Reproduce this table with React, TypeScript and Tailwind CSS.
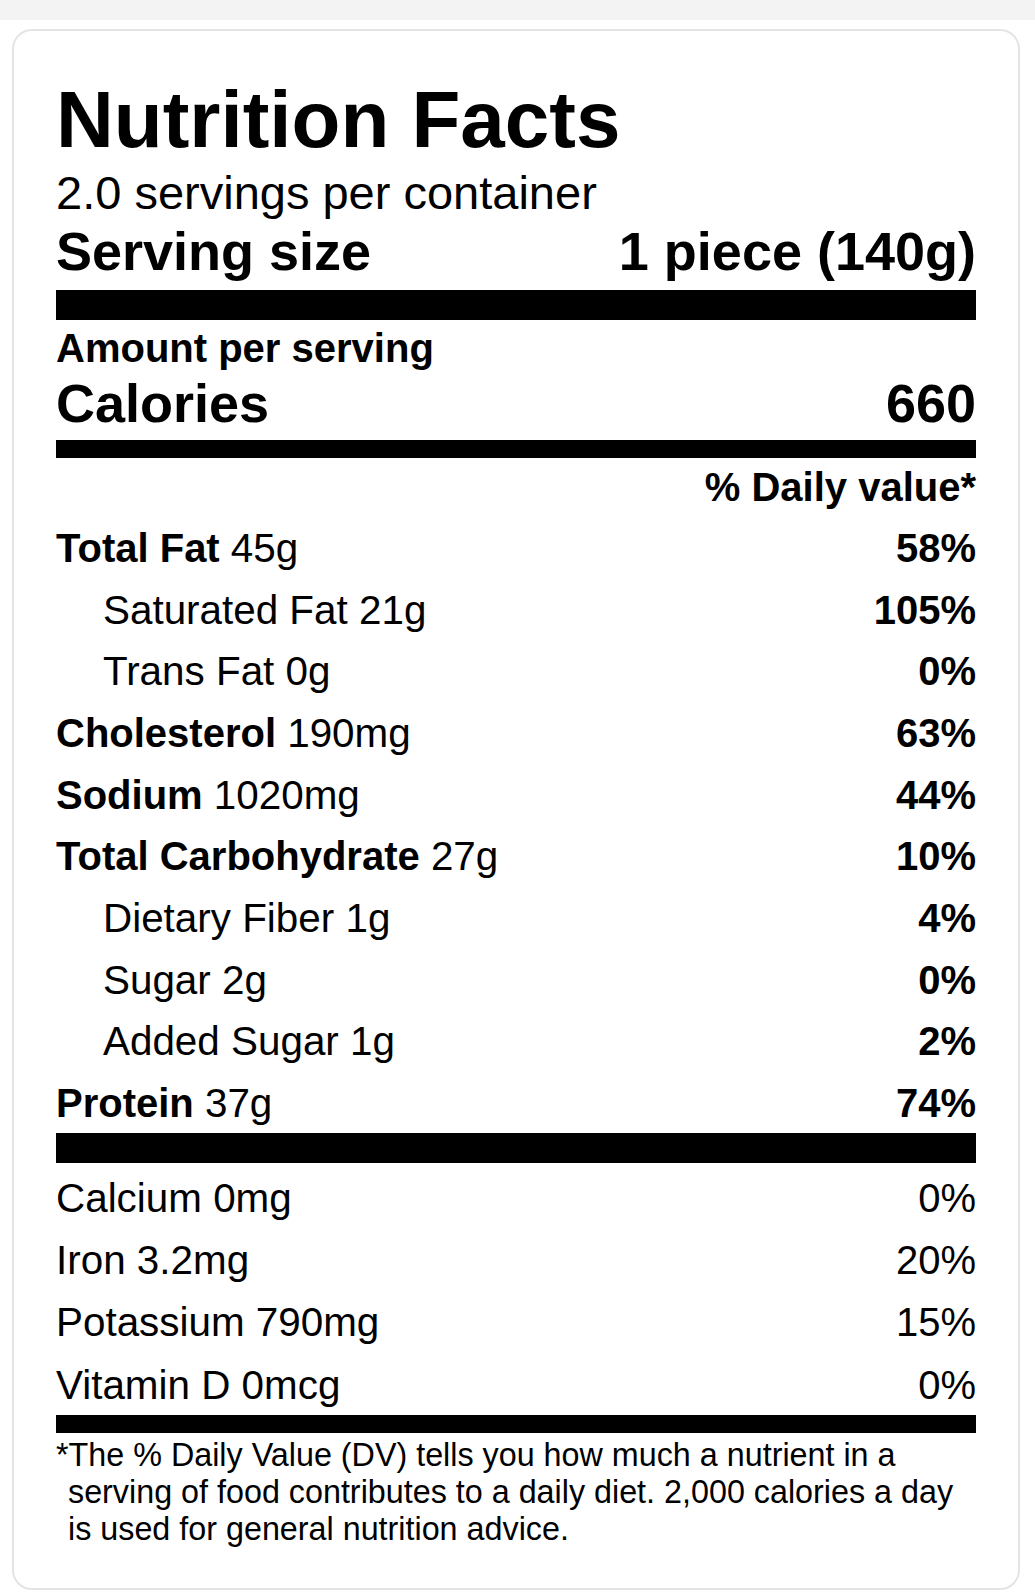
import React from 'react'

type Row = {
  name: string
  amount: string
  dv: string
  sub?: boolean
}

const macroRows: Row[] = [
  { name: 'Total Fat', amount: '45g', dv: '58%' },
  { name: 'Saturated Fat', amount: '21g', dv: '105%', sub: true },
  { name: 'Trans Fat', amount: '0g', dv: '0%', sub: true },
  { name: 'Cholesterol', amount: '190mg', dv: '63%' },
  { name: 'Sodium', amount: '1020mg', dv: '44%' },
  { name: 'Total Carbohydrate', amount: '27g', dv: '10%' },
  { name: 'Dietary Fiber', amount: '1g', dv: '4%', sub: true },
  { name: 'Sugar', amount: '2g', dv: '0%', sub: true },
  { name: 'Added Sugar', amount: '1g', dv: '2%', sub: true },
  { name: 'Protein', amount: '37g', dv: '74%' },
]

const microRows = [
  { name: 'Calcium', amount: '0mg', dv: '0%' },
  { name: 'Iron', amount: '3.2mg', dv: '20%' },
  { name: 'Potassium', amount: '790mg', dv: '15%' },
  { name: 'Vitamin D', amount: '0mcg', dv: '0%' },
]

function MacroRow({ row }: { row: Row }) {
  return (
    <div className="flex items-center justify-between text-[40px] leading-[57.67px]">
      {row.sub ? (
        <span className="pl-[47px] text-[40.4px] font-normal">
          {row.name} {row.amount}
        </span>
      ) : (
        <span>
          <span className="font-bold">{row.name}</span>{' '}
          <span className="text-[40.4px]">{row.amount}</span>
        </span>
      )}
      <span className="font-bold">{row.dv}</span>
    </div>
  )
}

export default function App() {
  return (
    <div
      className="min-h-screen bg-white text-black"
      style={{ fontFamily: '"Liberation Sans", Arial, Helvetica, sans-serif' }}
    >
      <div className="h-[20px] bg-[#f3f3f3]" />
      <div className="mt-[9px] ml-[12px] mr-[15px] rounded-[20px] border-2 border-[#e4e4e4] bg-white px-[42px] pt-[49px] pb-[40px]">
        <h1 className="text-[80px] font-bold leading-[80px]">Nutrition Facts</h1>
        <p className="mt-[7px] text-[47px] leading-[52px]">2.0 servings per container</p>
        <div className="mt-[2px] flex items-center justify-between text-[54px] font-bold leading-[60px]">
          <span>Serving size</span>
          <span>1 piece (140g)</span>
        </div>
        <div className="mt-[9px] h-[30px] bg-black" />

        <p className="mt-[6px] text-[40px] font-bold leading-[44px]">Amount per serving</p>
        <div className="mt-[3px] flex items-center justify-between text-[54px] font-bold leading-[60px]">
          <span>Calories</span>
          <span>660</span>
        </div>
        <div className="mt-[7px] h-[18px] bg-black" />

        <p className="mt-[7px] text-right text-[40px] font-bold leading-[44px]">% Daily value*</p>
        <div className="mt-[11px] flex flex-col gap-[4px]">
          {macroRows.map((row) => (
            <MacroRow key={row.name} row={row} />
          ))}
        </div>
        <div className="h-[30px] bg-black" />

        <div className="mt-[7px] flex flex-col gap-[4.67px]">
          {microRows.map((row) => (
            <div
              key={row.name}
              className="flex items-center justify-between text-[40px] leading-[57.67px]"
            >
              <span className="text-[40.4px]">
                {row.name} {row.amount}
              </span>
              <span>{row.dv}</span>
            </div>
          ))}
        </div>
        <div className="mt-[1px] h-[18px] bg-black" />

        <p className="mt-[4px] pl-[12px] -indent-[12px] text-[32.3px] leading-[37px]">
          *The % Daily Value (DV) tells you how much a nutrient in a serving of food
          contributes to a daily diet. 2,000 calories a day is used for general nutrition
          advice.
        </p>
      </div>
    </div>
  )
}
